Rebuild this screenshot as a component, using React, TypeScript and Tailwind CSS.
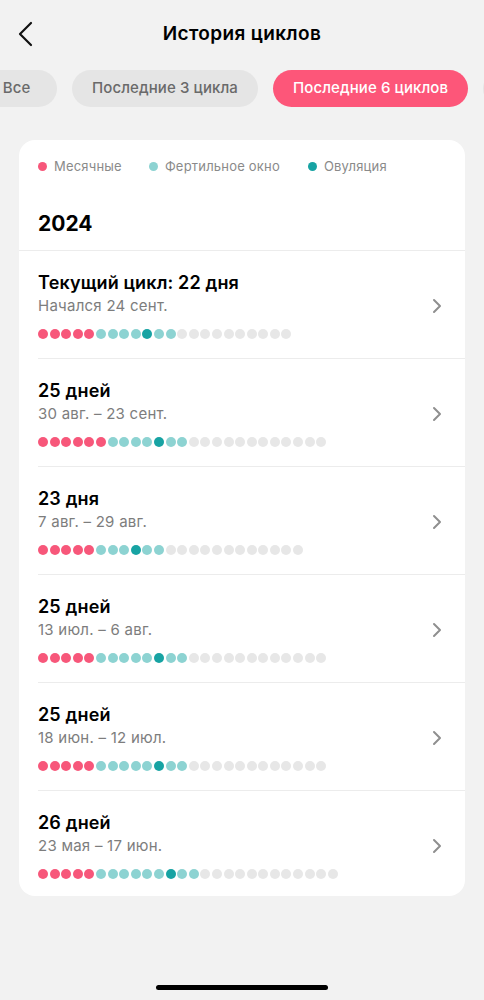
type Cycle = {
  title: string;
  range: string;
  // counts: period, fertile before ovulation, fertile after ovulation, total days
  period: number;
  before: number;
  after: number;
  total: number;
};

const cycles: Cycle[] = [
  { title: "Текущий цикл: 22 дня", range: "Начался 24 сент.", period: 5, before: 4, after: 2, total: 22 },
  { title: "25 дней", range: "30 авг. – 23 сент.", period: 6, before: 4, after: 2, total: 25 },
  { title: "23 дня", range: "7 авг. – 29 авг.", period: 5, before: 3, after: 2, total: 23 },
  { title: "25 дней", range: "13 июл. – 6 авг.", period: 5, before: 5, after: 2, total: 25 },
  { title: "25 дней", range: "18 июн. – 12 июл.", period: 5, before: 5, after: 2, total: 25 },
  { title: "26 дней", range: "23 мая – 17 июн.", period: 5, before: 6, after: 2, total: 26 },
];

const tabs = ["Все", "Последние 3 цикла", "Последние 6 циклов", "Последние 12 циклов"];

const dotColor = (c: Cycle, i: number) => {
  if (i < c.period) return "bg-[#f7577a]";
  if (i < c.period + c.before) return "bg-[#8dd3d2]";
  if (i === c.period + c.before) return "bg-[#17a3a3]";
  if (i < c.period + c.before + 1 + c.after) return "bg-[#8dd3d2]";
  return "bg-[#e7e7e7]";
};

const CycleRow = ({ cycle, last }: { cycle: Cycle; last: boolean }) => {
  return (
    <div className="pl-[19px]">
      <div className="border-t border-[#ececec]">
        <div className={`flex items-center pr-[23px] pt-[21px] ${last ? "pb-[17px]" : "pb-[19px]"}`}>
          <div className="flex-1">
            <p className="text-[18px] leading-[22px] font-semibold text-black tracking-[0.15px]">{cycle.title}</p>
            <p className="mt-[2px] text-[15px] leading-[20px] text-[#7d7d7d] tracking-[0.25px]">{cycle.range}</p>
            <div className="mt-[13px] flex gap-[1.6px]">
              {Array.from({ length: cycle.total }, (_, i) => (
                <span key={i} className={`w-[10px] h-[10px] rounded-full ${dotColor(cycle, i)}`}></span>
              ))}
            </div>
          </div>
          <svg width="10" height="16" viewBox="0 0 10 16" fill="none">
            <polyline points="2,2 8,8 2,14" stroke="#8f8f8f" strokeWidth="2" strokeLinecap="round" strokeLinejoin="round" />
          </svg>
        </div>
      </div>
    </div>
  );
};

export default function App() {
  return (
    <div className="min-h-[1000px] bg-[#f2f2f2] flex flex-col overflow-hidden font-['Inter','Noto_Sans',sans-serif]">
      {/* header */}
      <div className="relative h-[68px] flex items-center justify-center">
        <button className="absolute left-[17px] top-[21px]">
          <svg width="17" height="26" viewBox="0 0 17 26" fill="none">
            <polyline points="14,2 3,13 14,24" stroke="#111" strokeWidth="2.2" strokeLinecap="round" strokeLinejoin="round" />
          </svg>
        </button>
        <h1 className="text-[19px] font-semibold text-black tracking-[0.35px]">История циклов</h1>
      </div>

      {/* period tabs */}
      <div className="mt-[2px] flex gap-[15px] ml-[-24px] whitespace-nowrap">
        {tabs.map((tab, i) => (
          <button
            key={tab}
            className={`h-[37px] rounded-full text-[15px] font-medium shrink-0 tracking-[0.1px] ${
              i === 0 ? "w-[81px]" : "px-[20px]"
            } ${i === 2 ? "bg-[#fd5679] text-white" : "bg-[#e5e5e5] text-[#6a6a6a]"}`}
          >
            {tab}
          </button>
        ))}
      </div>

      {/* history card */}
      <div className="mt-[33px] mx-[19px] bg-white rounded-[16px]">
        <div className="flex items-center pt-[18px] px-[19px] text-[13px] leading-[16px] text-[#8a8a8a] tracking-[0.2px]">
          <span className="w-[9px] h-[9px] rounded-full bg-[#f7577a]"></span>
          <span className="ml-[7px]">Месячные</span>
          <span className="ml-[27px] w-[9px] h-[9px] rounded-full bg-[#8dd3d2]"></span>
          <span className="ml-[7px]">Фертильное окно</span>
          <span className="ml-[28px] w-[9px] h-[9px] rounded-full bg-[#17a3a3]"></span>
          <span className="ml-[7px]">Овуляция</span>
        </div>
        <p className="mt-[36px] px-[19px] pb-[12px] text-[21px] leading-[28px] font-bold text-black">2024</p>
        <div className="border-t border-[#ececec]">
          {cycles.map((cycle, i) => (
            <div key={i} className={i === 0 ? "-mt-px" : ""}>
              <CycleRow cycle={cycle} last={i === cycles.length - 1} />
            </div>
          ))}
        </div>
      </div>

      {/* home indicator */}
      <div className="mt-auto mb-[10px] flex justify-center">
        <div className="w-[172px] h-[5px] rounded-full bg-black"></div>
      </div>
    </div>
  );
}
